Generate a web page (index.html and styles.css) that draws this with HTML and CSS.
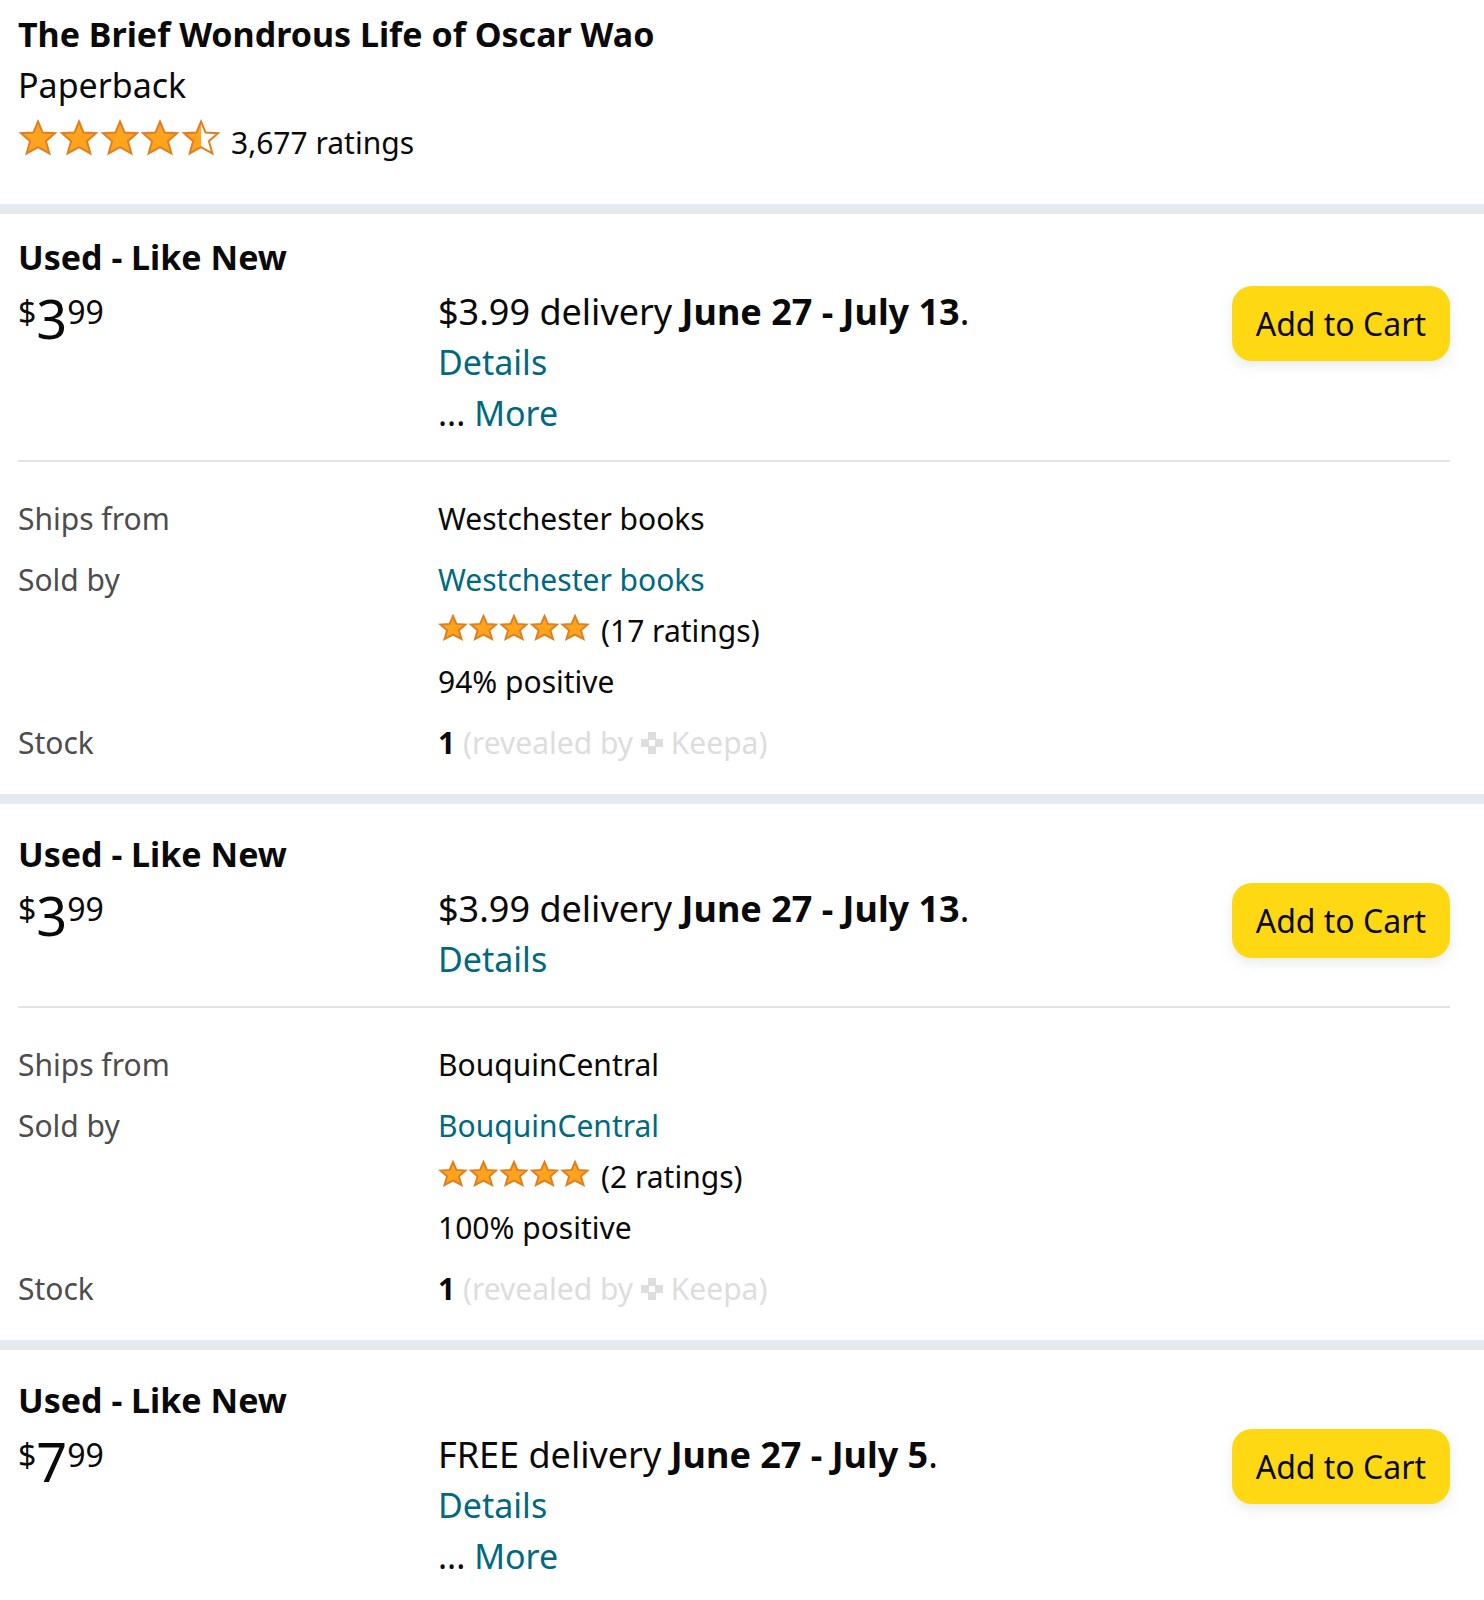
FILE: index.html
```
<!DOCTYPE html>
<html lang="en">
<head>
<meta charset="utf-8" />
<title>The Brief Wondrous Life of Oscar Wao</title>
<link rel="stylesheet" href="styles.css">
</head>
<body>

<!-- star shapes, shared by every rating -->
<svg class="defs" width="0" height="0" aria-hidden="true">
	<defs>
		<path id="star" d="M20 4.5 L24.6 15.6 L37 16.2 L27.9 24.2 L31.4 36.5 L20 30.2 L8.6 36.5 L12.1 24.2 L3 16.2 L15.4 15.6 Z"/>
		<path id="star-left" d="M20 4.5 L20 30.2 L8.6 36.5 L12.1 24.2 L3 16.2 L15.4 15.6 Z"/>
		<path id="star-small" d="M15 3 L18.4 10.9 L27.5 11.6 L20.9 17.3 L23.5 26 L15 21.6 L6.5 26 L9.1 17.3 L2.5 11.6 L11.6 10.9 Z"/>
		<path id="keepa" d="M7 0h8v7h7v8h-7v7h-8v-7h-7v-8h7zM8 8v6h6v-6z"/>
	</defs>
</svg>

<div class="product">
	<h1 class="title">The Brief Wondrous Life of Oscar Wao</h1>
	<div class="format">Paperback</div>
	<div class="rating">
		<svg class="stars" width="202" height="40" viewBox="0 0 202 40" role="img" aria-label="4.5 out of 5 stars">
			<use href="#star" x="0"/>
			<use href="#star" x="41"/>
			<use href="#star" x="82"/>
			<use href="#star" x="122"/>
			<use href="#star-left" class="half" x="163"/>
			<use href="#star" class="outline" x="163"/>
		</svg>
		<span>3,677 ratings</span>
	</div>
</div>

<div class="offer first">
	<h2 class="condition">Used - Like New</h2>
	<div class="buy">
		<div class="price"><span class="symbol">$</span><span class="whole">3</span><span class="cents">99</span></div>
		<div class="delivery">
			<div class="date">$3.99 delivery <b>June 27 - July 13</b>.</div>
			<div><a href="#">Details</a></div>
			<div>... <a href="#">More</a></div>
		</div>
		<button class="cart" type="button">Add to Cart</button>
	</div>
	<dl class="seller">
		<dt>Ships from</dt>
		<dd>Westchester books</dd>
		<dt>Sold by</dt>
		<dd>
			<a href="#">Westchester books</a>
			<div class="rating">
				<svg class="stars small" width="152" height="29" viewBox="0 0 152 29" role="img" aria-label="5 out of 5 stars">
					<use href="#star-small" x="0"/>
					<use href="#star-small" x="30.5"/>
					<use href="#star-small" x="61"/>
					<use href="#star-small" x="91.5"/>
					<use href="#star-small" x="122"/>
				</svg>
				<span>(17 ratings)</span>
			</div>
			<div>94% positive</div>
		</dd>
		<dt>Stock</dt>
		<dd><b>1</b> <span class="revealed">(revealed by <svg class="keepa" width="22" height="22" viewBox="0 0 22 22" aria-hidden="true"><use href="#keepa"/></svg> Keepa)</span></dd>
	</dl>
</div>

<div class="offer">
	<h2 class="condition">Used - Like New</h2>
	<div class="buy">
		<div class="price"><span class="symbol">$</span><span class="whole">3</span><span class="cents">99</span></div>
		<div class="delivery">
			<div class="date">$3.99 delivery <b>June 27 - July 13</b>.</div>
			<div><a href="#">Details</a></div>
		</div>
		<button class="cart" type="button">Add to Cart</button>
	</div>
	<dl class="seller">
		<dt>Ships from</dt>
		<dd>BouquinCentral</dd>
		<dt>Sold by</dt>
		<dd>
			<a href="#">BouquinCentral</a>
			<div class="rating">
				<svg class="stars small" width="152" height="29" viewBox="0 0 152 29" role="img" aria-label="5 out of 5 stars">
					<use href="#star-small" x="0"/>
					<use href="#star-small" x="30.5"/>
					<use href="#star-small" x="61"/>
					<use href="#star-small" x="91.5"/>
					<use href="#star-small" x="122"/>
				</svg>
				<span>(2 ratings)</span>
			</div>
			<div>100% positive</div>
		</dd>
		<dt>Stock</dt>
		<dd><b>1</b> <span class="revealed">(revealed by <svg class="keepa" width="22" height="22" viewBox="0 0 22 22" aria-hidden="true"><use href="#keepa"/></svg> Keepa)</span></dd>
	</dl>
</div>

<div class="offer last">
	<h2 class="condition">Used - Like New</h2>
	<div class="buy">
		<div class="price"><span class="symbol">$</span><span class="whole">7</span><span class="cents">99</span></div>
		<div class="delivery">
			<div class="date">FREE delivery <b>June 27 - July 5</b>.</div>
			<div><a href="#">Details</a></div>
			<div>... <a href="#">More</a></div>
		</div>
		<button class="cart" type="button">Add to Cart</button>
	</div>
</div>

</body>
</html>
```

FILE: styles.css
```
	html,body{margin:0;padding:0;}
	body {
		font-family: "Noto Sans", "Open Sans", sans-serif;
		font-size: 34px;
		line-height: 51px;
		color: #0a0a0a;
		background: #fff;
	}
	a {
		color: #006980;
		text-decoration: none;
	}
	a:hover {
		text-decoration: underline;
	}
	.defs {
		position: absolute;
	}

	/* product header */
	.product {
		padding: 9px 34px 36px 18px;
	}
	.title, .condition {
		margin: 0;
		font-size: 34px;
		font-weight: bold;
	}
	.rating {
		display: flex;
		align-items: flex-start;
		gap: 11px;
		font-size: 30px;
	}
	.product .rating {
		margin-top: 6px;
	}
	.stars {
		fill: #ffa41c;
		stroke: #e07f20;
		stroke-width: 2;
		flex: none;
	}
	.stars.small {
		margin-top: 8px;
	}
	.stars .half {
		stroke: none;
	}
	.stars .outline {
		fill: none;
	}

	/* offers */
	.offer {
		padding: 25px 34px 26px 18px;
		border-top: 10px solid #e4ebf0;
	}
	.first {
		padding-top: 18px;
	}
	.last {
		padding-bottom: 0;
	}
	.buy {
		display: grid;
		grid-template-columns: 420px 1fr auto;
		align-items: start;
		padding: 3px 0 21px;
	}
	.price {
		display: flex;
		font-size: 32px;
	}
	.whole {
		font-size: 54px;
		line-height: 64px;
	}
	.date {
		font-size: 36px;
	}
	.cart {
		margin: 0;
		padding: 12px 24px;
		font-family: inherit;
		font-size: 32px;
		line-height: 51px;
		color: #0a0a0a;
		background: #ffd814;
		border: 0;
		border-radius: 20px;
		box-shadow: 0 5px 12px rgba(213,217,217,.5);
		cursor: pointer;
	}
	.seller {
		display: grid;
		grid-template-columns: 420px 1fr;
		row-gap: 10px;
		margin: 0;
		padding-top: 31px;
		border-top: 2px solid #e3e3e3;
		font-size: 30px;
	}
	.seller dt {
		color: #4d4d4d;
	}
	.seller dd {
		margin: 0;
	}
	.revealed {
		color: #ddd;
	}
	.keepa {
		fill: #ddd;
		fill-rule: evenodd;
	}
```
